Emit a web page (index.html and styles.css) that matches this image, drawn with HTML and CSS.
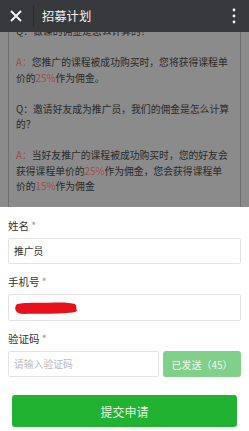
FILE: index.html
```html
<!DOCTYPE html>
<html lang="zh-CN">
<head>
    <meta charset="UTF-8">
    <meta name="viewport" content="width=device-width, initial-scale=1.0">
    <title>招募计划</title>
    <link rel="stylesheet" href="styles.css">
</head>
<body>
    <div class="topbar">
        <svg class="close" width="12" height="12" viewBox="0 0 12 12">
            <path d="M1 1 L11 11 M11 1 L1 11" stroke="#f4f4f4" stroke-width="2"/>
        </svg>
        <span class="divider"></span>
        <span class="title">招募计划</span>
        <svg class="more" width="4" height="16" viewBox="0 0 4 16">
            <circle cx="2" cy="2" r="1.4" fill="#f4f4f4"/>
            <circle cx="2" cy="8" r="1.4" fill="#f4f4f4"/>
            <circle cx="2" cy="14" r="1.4" fill="#f4f4f4"/>
        </svg>
    </div>

    <div class="backdrop">
        <div class="faq">
            <p>Q：做课的佣金是怎么计算的？</p>
            <p><span class="red">A：</span>您推广的课程被成功购买时，您将获得课程单价的<span class="red">25%</span>作为佣金。</p>
            <p>Q：邀请好友成为推广员，我们的佣金是怎么计算的？</p>
            <p><span class="red">A：</span>当好友推广的课程被成功购买时，您的好友会获得课程单价的<span class="red">25%</span>作为佣金，您会获得课程单价的<span class="red">15%</span>作为佣金</p>
        </div>
    </div>

    <div class="sheet">
        <div class="group">
            <label>姓名 <span class="star">*</span></label>
            <div class="field">推广员</div>
        </div>
        <div class="group">
            <label>手机号 <span class="star">*</span></label>
            <div class="field phone">
                <svg width="64" height="14" viewBox="0 0 64 14">
                    <path d="M3 3 C12 1 30 2 42 1.5 C50 1.2 58 2 61 3 C63 5 62 8 63 10 C60 12 52 12 44 12.5 C32 13 20 12.5 10 13 C6 13 3 12 2 10 C0.5 8 1 5 3 3 Z" fill="#e8111b"/>
                </svg>
            </div>
        </div>
        <div class="group">
            <label>验证码 <span class="star">*</span></label>
            <div class="code-row">
                <div class="field placeholder">请输入验证码</div>
                <button class="send">已发送（45）</button>
            </div>
        </div>
        <button class="submit">提交申请</button>
    </div>
</body>
</html>
```

FILE: styles.css
```css
body {
    margin: 0;
    font-family: "Noto Sans CJK SC", "Noto Sans", sans-serif;
    background-color: #ffffff;
    width: 249px;
    height: 431px;
    overflow: hidden;
}
.topbar {
    height: 32px;
    background-color: #38393d;
    display: flex;
    align-items: center;
    position: relative;
    z-index: 1;
}
.topbar .close {
    margin-left: 10px;
}
.topbar .divider {
    width: 1px;
    height: 22px;
    background-color: #2b2c2f;
    margin-left: 11px;
}
.topbar .title {
    margin-left: 8px;
    color: #f2f2f2;
    font-size: 12.3px;
    flex: 1;
}
.topbar .more {
    margin-right: 13px;
}
.backdrop {
    height: 175px;
    background-color: #8b8b8b;
    overflow: hidden;
}
.faq {
    margin: -8px 8px 0 8px;
    border-left: 1px solid #6f6f6f;
    border-right: 1px solid #6f6f6f;
    padding: 0 10px 0 7px;
    height: 200px;
    color: #2a2a2a;
    font-size: 9.8px;
    line-height: 15.5px;
}
.faq p {
    margin: 0 0 15.5px 0;
}
.faq .red {
    color: #a04b52;
}
.sheet {
    padding: 12px 8px 0 8px;
}
.group {
    margin-bottom: 11px;
}
.group label {
    display: block;
    font-size: 10.5px;
    line-height: 13px;
    color: #333333;
    margin-bottom: 6px;
}
.group .star {
    color: #999999;
}
.field {
    height: 26px;
    box-sizing: border-box;
    border: 1px solid #e3e3e3;
    border-radius: 2px;
    padding: 0 5px;
    display: flex;
    align-items: center;
    font-size: 9.8px;
    color: #333333;
}
.field.phone {
    height: 27px;
}
.field.placeholder {
    color: #bbbbbb;
    flex: 1;
}
.code-row {
    display: flex;
    gap: 4px;
}
.send {
    width: 78px;
    height: 26px;
    border: none;
    border-radius: 3px;
    background-color: #80cf8a;
    color: #eefaef;
    font-family: inherit;
    font-size: 10px;
    padding: 0;
}
.submit {
    display: block;
    margin: 18px 4px 0 4px;
    width: 225px;
    height: 32px;
    border: none;
    border-radius: 3px;
    background-color: #22b232;
    color: #e6f7e6;
    font-family: inherit;
    font-size: 12px;
    padding: 0;
}
```
